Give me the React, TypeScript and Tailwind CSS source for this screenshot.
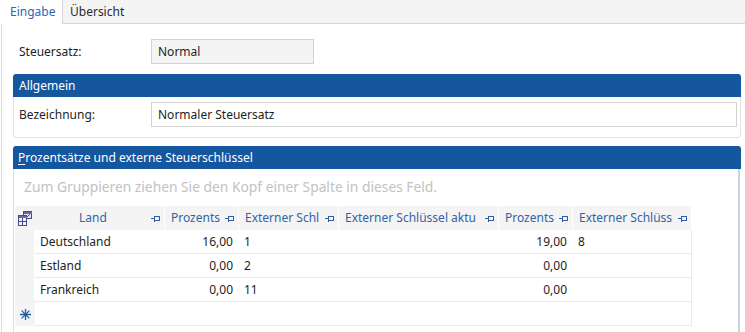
import React from "react";

const Pin = () => (
  <svg width="10" height="8" viewBox="0 0 10 8" className="shrink-0">
    <path d="M0 4.5H3.5M3.5 1.5V7.5M3.5 2.5H8.5V6.5H3.5" fill="none" stroke="#2f5fa8" strokeWidth="1" shapeRendering="crispEdges" />
  </svg>
);

const ColIcon = () => (
  <svg width="14" height="15" viewBox="0 0 14 15">
    <rect x="5.5" y="0.5" width="8" height="7" fill="#dfe3f2" stroke="#4a4a8a" shapeRendering="crispEdges" />
    <rect x="5.5" y="0.5" width="8" height="2" fill="#6a6aa8" shapeRendering="crispEdges" />
    <rect x="0.5" y="4.5" width="8" height="10" fill="#eef0f8" stroke="#4a4a8a" shapeRendering="crispEdges" />
    <rect x="0.5" y="4.5" width="8" height="2" fill="#6a6aa8" shapeRendering="crispEdges" />
    <path d="M0.5 10.5H8.5M4.5 6.5V14.5" stroke="#4a4a8a" shapeRendering="crispEdges" />
    <path d="M9 6L12 3" stroke="#4a4a8a" />
  </svg>
);

const Star = () => (
  <svg width="11" height="11" viewBox="0 0 11 11">
    <path d="M5.5 0V11M0 5.5H11M1.6 1.6L9.4 9.4M9.4 1.6L1.6 9.4" stroke="#1f5fb0" strokeWidth="1.3" />
  </svg>
);

const cols = [
  { w: 130, label: "Land", center: true },
  { w: 74, label: "Prozents" },
  { w: 100, label: "Externer Schl" },
  { w: 160, label: "Externer Schlüssel aktu" },
  { w: 74, label: "Prozents" },
  { w: 119, label: "Externer Schlüss" },
];

const rows = [
  ["Deutschland", "16,00", "1", "", "19,00", "8"],
  ["Estland", "0,00", "2", "", "0,00", ""],
  ["Frankreich", "0,00", "11", "", "0,00", ""],
];

const widthCls = ["w-[130px]", "w-[74px]", "w-[100px]", "w-[160px]", "w-[74px]", "w-[119px]"];

export default function App() {
  return (
    <div
      className="w-[745px] h-[332px] bg-white overflow-hidden text-[12px] text-[#1e1e1e] relative"
      style={{ fontFamily: '"Noto Sans", "Open Sans", sans-serif' }}
    >
      {/* Tabs */}
      <div className="flex h-[24px] bg-[#f4f4f4] border-b border-[#d6d6d6]">
        <div className="w-[63px] h-[24px] bg-white border-r border-[#d6d6d6] flex items-center pl-[10px] text-[#2b66b3] leading-none">
          Eingabe
        </div>
        <div className="flex items-center pl-[7px] text-[#2a2a2a] leading-none">Übersicht</div>
      </div>

      {/* Body */}
      <div className="border-l border-[#dcdcdc] ml-[1px] h-[308px] pl-[11px] pr-[4px]">
        {/* Steuersatz */}
        <div className="flex items-center pt-[15px] h-[40px]">
          <div className="w-[138px] pl-[6px]">Steuersatz:</div>
          <div className="w-[163px] h-[25px] bg-[#f4f4f4] border border-[#d2d2d2] flex items-center pl-[6px]">
            Normal
          </div>
        </div>

        {/* Allgemein */}
        <div className="mt-[10px]">
          <div className="h-[23px] bg-[#14579f] rounded-t-[3px] text-white flex items-center pl-[6px]">Allgemein</div>
          <div className="h-[41px] border border-t-0 border-[#e2e2e2] rounded-b-[4px] flex items-start pt-[5px] pr-[3px]">
            <div className="w-[137px] pl-[5px] h-[25px] flex items-center">Bezeichnung:</div>
            <div className="flex-1 h-[25px] bg-white border border-[#d2d2d2] flex items-center pl-[6px]">
              Normaler Steuersatz
            </div>
          </div>
        </div>

        {/* Prozentsätze */}
        <div className="mt-[8px]">
          <div className="h-[23px] bg-[#14579f] rounded-t-[3px] text-white flex items-center pl-[5px]">
            <span>
              <span className="underline underline-offset-2">P</span>rozentsätze und externe Steuerschlüssel
            </span>
          </div>
          <div className="h-[200px] border-l border-[#d8dde6] border-r-2 border-r-[#c9d3e2] mr-[1px] pl-[1px]">
            <div className="h-[37px] flex items-center pl-[9px] text-[#c2c2c2] text-[13.8px] whitespace-nowrap">
              Zum Gruppieren ziehen Sie den Kopf einer Spalte in dieses Feld.
            </div>
            <div className="w-[677px]">
              {/* header */}
              <div className="flex h-[24px] bg-[#f4f4f4]">
                <div className="w-[20px] flex items-center justify-center">
                  <ColIcon />
                </div>
                {cols.map((c, i) => (
                  <div
                    key={i}
                    className={`${widthCls[i]} h-[24px] flex items-center border-r border-white pr-[3px] text-[#3163aa] ${i === 0 ? "" : "pl-[6px]"}`}
                  >
                    <div className={`flex-1 whitespace-nowrap overflow-hidden ${c.center ? "text-center" : ""}`}>{c.label}</div>
                    <Pin />
                  </div>
                ))}
              </div>
              {/* rows */}
              {rows.map((r, ri) => (
                <div key={ri} className="flex h-[24px]">
                  <div className="w-[20px] bg-[#f4f4f4]" />
                  <div className="flex flex-1 border-b border-[#ebebeb] border-r border-r-[#ebebeb]">
                    {r.map((v, ci) => (
                      <div
                        key={ci}
                        className={`${widthCls[ci]} h-[23px] flex items-center whitespace-nowrap ${
                          ci === 1 || ci === 4 ? "justify-end pr-[5px]" : "pl-[6px]"
                        }`}
                      >
                        {v}
                      </div>
                    ))}
                  </div>
                </div>
              ))}
              <div className="flex h-[24px]">
                <div className="w-[20px] bg-[#f4f4f4] flex items-center justify-center">
                  <Star />
                </div>
                <div className="flex-1 border-b border-[#ebebeb] border-r border-r-[#ebebeb]" />
              </div>
            </div>
          </div>
        </div>
      </div>
    </div>
  );
}
